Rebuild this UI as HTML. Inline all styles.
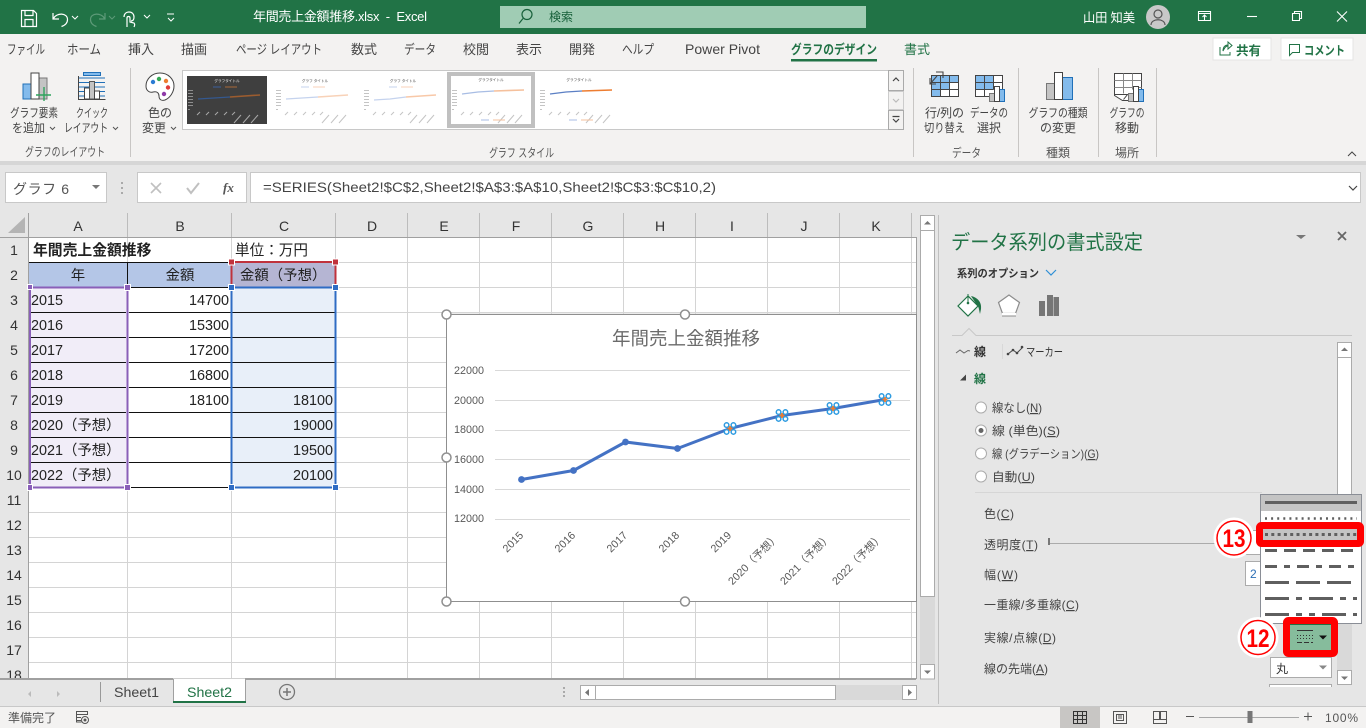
<!DOCTYPE html>
<html lang="ja"><head><meta charset="utf-8"><title>年間売上金額推移.xlsx - Excel</title>
<style>
html,body{margin:0;padding:0;width:1366px;height:728px;overflow:hidden;background:#e6e6e6}
svg{display:block;font-family:"Liberation Sans","Noto Sans CJK JP",sans-serif}
text{fill:#444;font-size:12px}
.t{font-size:13px;fill:#444}
.r{font-size:12px;fill:#444}
.g{font-size:12px;fill:#555}
.h{font-size:14px;fill:#333;text-anchor:middle}
.c{font-size:14.4px;fill:#222}
.e{text-anchor:end}
.m{text-anchor:middle}
.y{font-size:10.8px;fill:#595959;text-anchor:end}
.x{font-size:10.8px;fill:#595959;text-anchor:end}
.p{font-size:12px;fill:#444}
.s{font-size:3.6px;fill:#888;text-anchor:middle;font-weight:bold}
.b{filter:blur(.35px)}
</style></head><body>
<svg xmlns="http://www.w3.org/2000/svg" width="1366" height="728" viewBox="0 0 1366 728">
<defs>
<g id="tk" fill="#c4c4c4"><rect x="1" y="14" width="5" height="1"/><rect x="1" y="17" width="5" height="1"/><rect x="1" y="20" width="5" height="1"/><rect x="1" y="23" width="5" height="1"/><rect x="1" y="26" width="5" height="1"/><rect x="1" y="29" width="5" height="1"/><rect x="1" y="33" width="2" height="1"/></g>
<g id="xl" stroke="#c4c4c4" stroke-width="1"><path d="M10 39l3-3M19 39l3-3M28 39l3-3M37 39l3-3M45 39l3-3M47 47l7-8M56 47l7-8M64 47l7-8"/></g>
<g id="mk"><g fill="#fff" stroke="#2e9be0" stroke-width="1.500"><circle cx="-3.400" cy="-3.400" r="2.300"/><circle cx="3.400" cy="-3.400" r="2.300"/><circle cx="-3.400" cy="3.400" r="2.300"/><circle cx="3.400" cy="3.400" r="2.300"/></g><path d="M0-2.500V2.500M-2.500 0H2.500" stroke="#ed7d31" stroke-width="1.800"/></g>
</defs>

<!-- title bar -->
<rect width="1366" height="34" fill="#217346"/>
<g fill="none" stroke="#fff" stroke-width="1.200">
<path d="M21.500 10.500h12l3 3v13h-15zM25 10.500v5h8v-5M25 26.500v-7h8v7"/>
<path d="M53 13v6h6M53.500 18.500c3-6 14-6 14 1 0 4-3 6-6 7"/>
<path d="M72 16l3 3 3-3M144 15l3 3 3-3" stroke-width="1"/>
<path d="M167 14h7M168 18l3 3 3-3" stroke-width="1"/>
<path d="M124 17c0-3 2-5 5-5s5 2 5 5-1 4-3 4M127 27v-9c0-2 3-2 3 0v4l4 1c1 1 1 2 0 4"/>
</g>
<g fill="none" stroke="#5d9a78" stroke-width="1.200"><path d="M105 13v6h-6M104.500 18.500c-3-6-14-6-14 1 0 4 3 6 6 7"/><path d="M109 16l3 3 3-3" stroke-width="1"/></g>
<text x="253" y="21" style="font-size:13px;fill:#fff" textLength="174" lengthAdjust="spacing">年間売上金額推移.xlsx&#160;&#160;-&#160;&#160;Excel</text>
<rect x="500" y="6" width="366" height="22" fill="#a0ccb4"/>
<g fill="none" stroke="#17603a" stroke-width="1.200"><circle cx="527" cy="14.500" r="5"/><path d="M523 18.500l-4 5"/></g>
<text x="549" y="21" style="font-size:12px;fill:#17603a">検索</text>
<text x="1083" y="22" style="font-size:12.300px;fill:#fff" textLength="52">山田&#160;知美</text>
<circle cx="1158" cy="17" r="12" fill="#c8c8c8"/>
<g fill="none" stroke="#555" stroke-width="1.200"><circle cx="1158" cy="14" r="4"/><path d="M1151 25c0-7 14-7 14 0"/></g>
<g fill="none" stroke="#fff" stroke-width="1.100">
<path d="M1198.500 11.500h12v9h-12zM1198.500 13.500h12M1204.500 20v-5M1202.500 17l2-2 2 2"/>
<path d="M1247 16.500h10"/>
<path d="M1292.500 13.500h7v7h-7zM1294.500 13.500v-2h7v7h-2"/>
<path d="M1337 11.500l10 10M1347 11.500l-10 10"/>
</g>

<!-- tabs + ribbon -->
<rect y="34" width="1366" height="127" fill="#f3f2f1"/>
<rect y="161" width="1366" height="4" fill="#d6d6d6"/>
<text class="t" x="7" y="54" textLength="38" lengthAdjust="spacingAndGlyphs">ファイル</text>
<text class="t" x="67" y="54" textLength="34" lengthAdjust="spacingAndGlyphs">ホーム</text>
<text class="t" x="128" y="54" textLength="26">挿入</text>
<text class="t" x="181" y="54" textLength="26">描画</text>
<text class="t" x="236" y="54" textLength="86" lengthAdjust="spacingAndGlyphs">ページ レイアウト</text>
<text class="t" x="351" y="54" textLength="26">数式</text>
<text class="t" x="404" y="54" textLength="32" lengthAdjust="spacingAndGlyphs">データ</text>
<text class="t" x="463" y="54" textLength="26">校閲</text>
<text class="t" x="516" y="54" textLength="26">表示</text>
<text class="t" x="569" y="54" textLength="26">開発</text>
<text class="t" x="622" y="54" textLength="32" lengthAdjust="spacingAndGlyphs">ヘルプ</text>
<text class="t" x="685" y="54" style="font-size:14px" textLength="75">Power Pivot</text>
<text class="t" x="791" y="54" textLength="86" lengthAdjust="spacingAndGlyphs" style="fill:#217346;font-weight:bold">グラフのデザイン</text>
<rect x="791" y="59" width="86" height="2.500" fill="#217346"/>
<text class="t" x="904" y="54" textLength="26" style="fill:#217346">書式</text>
<rect x="1213" y="38" width="58" height="22" fill="#fff" stroke="#e4e4e4"/>
<path d="M1220 47v8h10v-3M1223 51c0-4 2-6 5-6v-3l4 3.500-4 3.500v-3c-2 0-3 1-5 5z" fill="none" stroke="#217346" stroke-width="1"/>
<text x="1236" y="55" style="font-size:12.500px;font-weight:bold;fill:#217346" textLength="25">共有</text>
<rect x="1281" y="38" width="72" height="22" fill="#fff" stroke="#e4e4e4"/>
<path d="M1289.500 44.500h10v8h-7l-3 3z" fill="none" stroke="#217346" stroke-width="1"/>
<text x="1304" y="55" style="font-size:12.500px;font-weight:bold;fill:#217346" textLength="41" lengthAdjust="spacingAndGlyphs">コメント</text>

<g fill="#c8c6c4"><rect x="130" y="68" width="1" height="89"/><rect x="913" y="68" width="1" height="89"/><rect x="1018" y="68" width="1" height="89"/><rect x="1098" y="68" width="1" height="89"/><rect x="1156" y="68" width="1" height="89"/></g>

<!-- add chart element -->
<rect x="23" y="84" width="9" height="15" fill="#83bbec" stroke="#2070b8"/>
<rect x="39" y="78" width="8" height="21" fill="#c4c4c4" stroke="#777"/>
<rect x="31" y="73" width="8" height="26" fill="#fff" stroke="#444"/>
<path d="M44 87v14M36 95h15" stroke="#2fa35d" stroke-width="1.400"/>
<!-- quick layout -->
<rect x="83.500" y="72.500" width="17" height="3" fill="#83bbec" stroke="#2070b8"/>
<path d="M78 78h27M78 82.500h27M78 87h27M78 91.500h27M78 96h27" stroke="#2070b8"/>
<path d="M78.500 76v23.500h27" fill="none" stroke="#444"/>
<rect x="84.500" y="88" width="5" height="11" fill="#fff" stroke="#444"/>
<rect x="89.500" y="81.500" width="5" height="17.500" fill="#c4c4c4" stroke="#555"/>
<rect x="94.500" y="91" width="5" height="8" fill="#fff" stroke="#444"/>
<text class="r m" x="34" y="117" textLength="48" lengthAdjust="spacingAndGlyphs">グラフ要素</text>
<text class="r" x="12" y="132" textLength="33" lengthAdjust="spacingAndGlyphs">を追加</text><path d="M50 127l2.500 2.500 2.500-2.500" fill="none" stroke="#555"/>
<text class="r m" x="92" y="117" textLength="32" lengthAdjust="spacingAndGlyphs">クイック</text>
<text class="r" x="64" y="132" textLength="44" lengthAdjust="spacingAndGlyphs">レイアウト</text><path d="M113 127l2.500 2.500 2.500-2.500" fill="none" stroke="#555"/>
<text class="g" x="25" y="156" textLength="80" lengthAdjust="spacingAndGlyphs">グラフのレイアウト</text>
<!-- palette -->
<path d="M160 73c-8 0-14 6-14 13 0 5 4 7 7 6 4-1 6 1 6 4 0 4 3 5 6 4 5-2 9-8 9-14 0-7-6-13-14-13z" fill="#fff" stroke="#444"/>
<circle cx="153" cy="82" r="2.200" fill="#2b7cd3"/><circle cx="159" cy="79" r="2.200" fill="#33a853"/><circle cx="166" cy="81" r="2.200" fill="#ed7d31"/><circle cx="168" cy="87.500" r="2.200" fill="#e03a3a"/><circle cx="164" cy="94" r="2.200" fill="#8e3aa8"/>
<text class="r" x="148" y="117" textLength="24">色の</text>
<text class="r" x="142" y="132" textLength="24">変更</text><path d="M171 127l2.500 2.500 2.500-2.500" fill="none" stroke="#555"/>

<!-- gallery -->
<rect x="182.500" y="70.500" width="721" height="59" fill="#fff" stroke="#c8c8c8"/>
<rect x="187" y="76" width="80" height="48" fill="#3f3f3f"/>
<g class="b" transform="translate(187 76)"><text class="s" x="40" y="6" style="fill:#bbb">グラフタイトル</text><path d="M26 11h8" stroke="#3b5f9e"/><path d="M38 11h12" stroke="#a86a3a"/><use href="#tk" opacity=".6"/><use href="#xl" opacity=".8"/><path d="M11 23l16-1 16-1" stroke="#34588f" stroke-width="1.300" fill="none"/><path d="M43 21l30-2" stroke="#9c5c2f" stroke-width="1.600" fill="none"/></g>
<g class="b" transform="translate(275 76)"><text class="s" x="40" y="6">グラフ タイトル</text><path d="M26 11h8" stroke="#c5d3ee"/><path d="M38 11h12" stroke="#f8d2b8"/><use href="#tk"/><use href="#xl"/><path d="M11 23l16-1 16-1" stroke="#c5d3ee" stroke-width="1.300" fill="none"/><path d="M43 21l30-2" stroke="#f8d2b8" stroke-width="1.600" fill="none"/></g>
<g class="b" transform="translate(363 76)"><text class="s" x="40" y="6">グラフ タイトル</text><path d="M26 11h8" stroke="#c5d3ee"/><path d="M38 11h12" stroke="#f8d2b8"/><use href="#tk"/><use href="#xl"/><path d="M11 24l16-1 16-2" stroke="#c5d3ee" stroke-width="1.300" fill="none"/><path d="M43 21l30-2" stroke="#f8c8a8" stroke-width="1.600" fill="none"/></g>
<rect x="447" y="72" width="88" height="56" fill="#c0c0c0"/><rect x="451" y="76" width="80" height="48" fill="#fff"/>
<g class="b" transform="translate(451 76)"><text class="s" x="40" y="5">グラフタイトル</text><use href="#tk"/><use href="#xl"/><path d="M11 18l16-2 16-1" stroke="#a8bde4" stroke-width="1.300" fill="none"/><path d="M43 15l30-1" stroke="#f5c09c" stroke-width="1.600" fill="none"/><path d="M30 44h8" stroke="#a8bde4"/><path d="M42 44h12" stroke="#f5c09c"/></g>
<g class="b" transform="translate(539 76)"><text class="s" x="40" y="5">グラフタイトル</text><use href="#tk"/><use href="#xl"/><path d="M11 18l16-2 16-1" stroke="#5b7fc4" stroke-width="1.300" fill="none"/><path d="M43 15l30-1" stroke="#ed7d31" stroke-width="1.400" fill="none"/><path d="M30 44h8" stroke="#a8bde4"/><path d="M42 44h12" stroke="#f5c09c"/></g>
<g fill="#f3f2f1" stroke="#aaa"><rect x="888.500" y="70.500" width="15" height="20"/><rect x="888.500" y="91.500" width="15" height="18" stroke="#ccc"/><rect x="888.500" y="110.500" width="15" height="19"/></g>
<path d="M893 81l3-3 3 3" fill="none" stroke="#444" stroke-width="1.200"/>
<path d="M893 99l3 3 3-3" fill="none" stroke="#bbb" stroke-width="1.200"/>
<path d="M892.500 116.500h7M893 119l3 3 3-3" fill="none" stroke="#444" stroke-width="1.200"/>
<text class="g" x="489" y="157" textLength="65" lengthAdjust="spacingAndGlyphs">グラフ スタイル</text>

<!-- data group -->
<rect x="931.500" y="75.500" width="27" height="21" fill="#fff" stroke="#444"/>
<path d="M932 75h27v7h-9v7h-9v7h-9z" fill="#83bbec"/>
<path d="M931.500 82.500h27M931.500 89.500h27M940.500 75.500v21M949.500 75.500v21" stroke="#444" fill="none"/><rect x="931.500" y="75.500" width="27" height="21" fill="none" stroke="#444"/>
<path d="M930 84l7-8M936 72h7v6M941 72h-5M930 78v6h6" fill="none" stroke="#444" stroke-width="1.100"/>
<text class="r" x="925" y="117" textLength="39">行/列の</text>
<text class="r" x="924" y="132" textLength="41" lengthAdjust="spacingAndGlyphs">切り替え</text>
<rect x="975.500" y="75.500" width="27" height="21" fill="#fff" stroke="#444"/>
<path d="M976 76h18v14h-18z" fill="#83bbec"/>
<path d="M975.500 82.500h27M975.500 89.500h18M984.500 75.500v21M993.500 75.500v14" stroke="#444" fill="none"/>
<rect x="989.500" y="93.500" width="5" height="8" fill="#c4c4c4" stroke="#777"/><rect x="999.500" y="89.500" width="5" height="12" fill="#83bbec" stroke="#2070b8"/><rect x="994.500" y="86.500" width="5" height="15" fill="#fff" stroke="#444"/>
<text class="r" x="970" y="117" textLength="38" lengthAdjust="spacingAndGlyphs">データの</text>
<text class="r" x="977" y="132" textLength="24">選択</text>
<text class="g" x="952" y="157" textLength="29" lengthAdjust="spacingAndGlyphs">データ</text>
<!-- chart type -->
<rect x="1046.500" y="83.500" width="8" height="16" fill="#c4c4c4" stroke="#777"/><rect x="1062.500" y="77.500" width="10" height="22" fill="#83bbec" stroke="#2070b8"/><rect x="1054.500" y="72.500" width="8" height="27" fill="#fff" stroke="#444"/>
<text class="r m" x="1058" y="117" textLength="59" lengthAdjust="spacingAndGlyphs">グラフの種類</text>
<text class="r m" x="1058" y="132" textLength="36">の変更</text>
<text class="g" x="1046" y="157" textLength="24">種類</text>
<!-- move -->
<path d="M1114.500 73.500h27v16h-5v11h-14l-8-5z" fill="#fff" stroke="#444"/>
<path d="M1114.500 80.500h27M1114.500 87.500h27M1123.500 73.500v20M1132.500 73.500v16" stroke="#888" fill="none"/>
<path d="M1114.500 94.500h13l-4 5" fill="none" stroke="#444"/>
<rect x="1128.500" y="93.500" width="5" height="8" fill="#c4c4c4" stroke="#777"/><rect x="1138.500" y="89.500" width="5" height="12" fill="#83bbec" stroke="#2070b8"/><rect x="1133.500" y="86.500" width="5" height="15" fill="#fff" stroke="#444"/>
<text class="r m" x="1127" y="117" textLength="35" lengthAdjust="spacingAndGlyphs">グラフの</text>
<text class="r m" x="1127" y="132" textLength="24">移動</text>
<text class="g" x="1115" y="157" textLength="24">場所</text>
<path d="M1348 156l4-4 4 4" fill="none" stroke="#444"/>

<!-- formula bar -->
<rect y="165" width="1366" height="48" fill="#e6e6e6"/>
<rect x="5.500" y="172.500" width="101" height="30" fill="#fff" stroke="#c8c8c8"/>
<text x="13" y="194" style="font-size:14px;fill:#555" textLength="56" lengthAdjust="spacing">グラフ 6</text>
<path d="M92 185h8l-4 4z" fill="#777"/>
<g fill="#aaa"><rect x="121" y="182" width="2" height="2"/><rect x="121" y="187" width="2" height="2"/><rect x="121" y="192" width="2" height="2"/></g>
<rect x="137.500" y="172.500" width="109" height="30" fill="#fff" stroke="#c8c8c8"/>
<path d="M151 183l10 10M161 183l-10 10" stroke="#c0c0c0" stroke-width="1.600"/>
<path d="M187 188l4 5 8-10" fill="none" stroke="#c0c0c0" stroke-width="2"/>
<text x="223" y="192" style="font-family:'Liberation Serif',serif;font-style:italic;font-weight:bold;font-size:13px;fill:#555">fx</text>
<rect x="250.500" y="172.500" width="1110" height="30" fill="#fff" stroke="#c8c8c8"/>
<text x="263" y="192" style="font-size:14px;fill:#444" textLength="453" lengthAdjust="spacingAndGlyphs">=SERIES(Sheet2!$C$2,Sheet2!$A$3:$A$10,Sheet2!$C$3:$C$10,2)</text>
<path d="M1349 186l4 4 4-4" fill="none" stroke="#444" stroke-width="1.200"/>

<!-- sheet -->
<rect x="0" y="237" width="916" height="441" fill="#fff"/>
<rect x="0" y="213" width="916" height="24" fill="#e6e6e6"/>
<rect x="0" y="237" width="28" height="441" fill="#e6e6e6"/>
<path d="M8 233L25 217v16z" fill="#b4b4b4"/>
<g stroke="#d4d4d4" fill="none">
<path d="M127.500 237V678M231.500 237V678M335.500 237V678M407.500 237V678M479.500 237V678M551.500 237V678M623.500 237V678M695.500 237V678M767.500 237V678M839.500 237V678M911.500 237V678"/>
<path d="M29 262.500H916M29 287.500H916M29 312.500H916M29 337.500H916M29 362.500H916M29 387.500H916M29 412.500H916M29 437.500H916M29 462.500H916M29 487.500H916M29 512.500H916M29 537.500H916M29 562.500H916M29 587.500H916M29 612.500H916M29 637.500H916M29 662.500H916"/>
</g>
<g stroke="#bcbcbc"><path d="M28.500 213v24M127.500 213v24M231.500 213v24M335.500 213v24M407.500 213v24M479.500 213v24M551.500 213v24M623.500 213v24M695.500 213v24M767.500 213v24M839.500 213v24M911.500 213v24"/></g>
<path d="M0 237.500H916M28.500 213V678" stroke="#a0a0a0" fill="none"/>
<path d="M916.500 237V678.500H0" fill="none" stroke="#a0a0a0"/>
<text class="h" x="78" y="231">A</text><text class="h" x="180" y="231">B</text><text class="h" x="284" y="231">C</text><text class="h" x="372" y="231">D</text><text class="h" x="444" y="231">E</text><text class="h" x="516" y="231">F</text><text class="h" x="588" y="231">G</text><text class="h" x="660" y="231">H</text><text class="h" x="732" y="231">I</text><text class="h" x="804" y="231">J</text><text class="h" x="876" y="231">K</text>
<text class="h" x="14" y="255">1</text><text class="h" x="14" y="280">2</text><text class="h" x="14" y="305">3</text><text class="h" x="14" y="330">4</text><text class="h" x="14" y="355">5</text><text class="h" x="14" y="380">6</text><text class="h" x="14" y="405">7</text><text class="h" x="14" y="430">8</text><text class="h" x="14" y="455">9</text><text class="h" x="14" y="480">10</text><text class="h" x="14" y="505">11</text><text class="h" x="14" y="530">12</text><text class="h" x="14" y="555">13</text><text class="h" x="14" y="580">14</text><text class="h" x="14" y="605">15</text><text class="h" x="14" y="630">16</text><text class="h" x="14" y="655">17</text><text class="h" x="14" y="680">18</text>
<rect x="0" y="678" width="916" height="2" fill="#a0a0a0"/>

<!-- table -->
<rect x="29" y="263" width="202" height="24" fill="#b4c6e7"/>
<rect x="232" y="263" width="104" height="24" fill="#b5b5d3"/>
<rect x="30" y="288" width="97" height="199" fill="#f1edf8"/>
<rect x="232" y="288" width="104" height="199" fill="#e8eff9"/>
<path d="M29 262.500H231M29 287.500H231M232 312.500H335M129 312.500H231M29 312.500H126M29 337.500H126M129 337.500H231M232 337.500H335M29 362.500H126M129 362.500H231M232 362.500H335M29 387.500H126M129 387.500H231M232 387.500H335M29 412.500H126M129 412.500H231M232 412.500H335M29 437.500H126M129 437.500H231M232 437.500H335M29 462.500H126M129 462.500H231M232 462.500H335M129 487.500H231M127.500 262V287" stroke="#111" fill="none"/>
<text class="c" x="33" y="255" style="font-weight:bold;font-size:14.800px">年間売上金額推移</text>
<text class="c" x="235" y="255" style="font-size:14.600px">単位：万円</text>
<text class="c m" x="78" y="280">年</text><text class="c m" x="180" y="280">金額</text>
<text class="c" x="240" y="280">金額（予想）</text>
<text class="c" x="31" y="305">2015</text><text class="c" x="31" y="330">2016</text><text class="c" x="31" y="355">2017</text><text class="c" x="31" y="380">2018</text><text class="c" x="31" y="405">2019</text>
<text class="c" x="31" y="430">2020（予想）</text><text class="c" x="31" y="455">2021（予想）</text><text class="c" x="31" y="480">2022（予想）</text>
<text class="c e" x="229" y="305">14700</text><text class="c e" x="229" y="330">15300</text><text class="c e" x="229" y="355">17200</text><text class="c e" x="229" y="380">16800</text><text class="c e" x="229" y="405">18100</text>
<text class="c e" x="333" y="405">18100</text><text class="c e" x="333" y="430">19000</text><text class="c e" x="333" y="455">19500</text><text class="c e" x="333" y="480">20100</text>
<!-- selections -->
<path d="M30 487.500V287.500H127.500V487.500H30" fill="none" stroke="#8a5fb8" stroke-width="2"/>
<path d="M231.500 287.500V262H335.500V287.500" fill="none" stroke="#c0323c" stroke-width="2"/>
<rect x="231.500" y="287.500" width="104" height="200" fill="none" stroke="#2f6cc4" stroke-width="2"/>
<g fill="#8a5fb8" stroke="#fff"><rect x="27.500" y="284.500" width="5" height="5"/><rect x="124.500" y="284.500" width="6" height="6"/><rect x="27.500" y="484.500" width="5" height="6"/><rect x="124.500" y="484.500" width="6" height="6"/></g>
<g fill="#c0323c" stroke="#fff"><rect x="228.500" y="259" width="6" height="6"/><rect x="332.500" y="259" width="6" height="6"/></g>
<g fill="#2f6cc4" stroke="#fff"><rect x="228.500" y="284.500" width="6" height="6"/><rect x="332.500" y="284.500" width="6" height="6"/><rect x="228.500" y="484.500" width="6" height="6"/><rect x="332.500" y="484.500" width="6" height="6"/></g>

<!-- chart -->
<rect x="446.500" y="314.500" width="470" height="287" fill="#fff" stroke="#8f8f8f"/>
<path d="M447 313H916" stroke="#d8d8d8"/>
<text x="686" y="345" class="m" style="font-size:18.500px;fill:#6b6b6b">年間売上金額推移</text>
<path d="M495 370.500H910M495 400.500H910M495 430.500H910M495 459.500H910M495 489.500H910M495 519.500H910" stroke="#d9d9d9"/>
<text class="y" x="484" y="374">22000</text><text class="y" x="484" y="404">20000</text><text class="y" x="484" y="433">18000</text><text class="y" x="484" y="463">16000</text><text class="y" x="484" y="493">14000</text><text class="y" x="484" y="522">12000</text>
<polyline points="521.500,479.500 573.500,470.500 625.500,442 677.500,448.500 730,428.500 782,415.500 833,408.500 885,399.500" fill="none" stroke="#4472c4" stroke-width="3" stroke-linejoin="round"/>
<g fill="#4472c4"><circle cx="521.500" cy="479.500" r="3.400"/><circle cx="573.500" cy="470.500" r="3.400"/><circle cx="625.500" cy="442" r="3.400"/><circle cx="677.500" cy="448.500" r="3.400"/></g>
<use href="#mk" x="730" y="428.500"/><use href="#mk" x="782" y="415.500"/><use href="#mk" x="833" y="408.500"/><use href="#mk" x="885" y="399.500"/>
<text class="x" transform="translate(524 536) rotate(-45)">2015</text>
<text class="x" transform="translate(576 536) rotate(-45)">2016</text>
<text class="x" transform="translate(628 536) rotate(-45)">2017</text>
<text class="x" transform="translate(680 536) rotate(-45)">2018</text>
<text class="x" transform="translate(732 536) rotate(-45)">2019</text>
<text class="x" transform="translate(780 538) rotate(-45)">2020（予想）</text>
<text class="x" transform="translate(832 538) rotate(-45)">2021（予想）</text>
<text class="x" transform="translate(884 538) rotate(-45)">2022（予想）</text>
<g fill="#fff" stroke="#8f8f8f" stroke-width="1.500"><circle cx="446.500" cy="314.500" r="4.500"/><circle cx="685" cy="314.500" r="4.500"/><circle cx="446.500" cy="457.500" r="4.500"/><circle cx="446.500" cy="601.500" r="4.500"/><circle cx="685" cy="601.500" r="4.500"/></g>

<!-- v scroll -->
<rect x="917" y="213" width="21" height="493" fill="#e6e6e6"/>
<rect x="920" y="597" width="15" height="82" fill="#d9d9d9"/>
<rect x="920.500" y="215.500" width="14" height="381" fill="#fff" stroke="#ababab"/>
<path d="M920 230.500H935" stroke="#ababab"/>
<path d="M924 224.500h7l-3.500-3.500z" fill="#777"/>
<rect x="920.500" y="664.500" width="14" height="14.500" fill="#fff" stroke="#ababab"/>
<path d="M924 670.500h7l-3.500 3.500z" fill="#777"/>
<path d="M938.500 215V704" stroke="#c0c0c0"/>

<!-- tab bar -->
<rect x="0" y="680" width="938" height="26" fill="#e6e6e6"/>
<path d="M31 691l-3 3 3 3zM57 691l3 3-3 3z" fill="#bbb"/>
<rect x="100" y="682" width="1" height="20" fill="#999"/>
<text x="114" y="697" style="font-size:14px;fill:#444" textLength="45" lengthAdjust="spacingAndGlyphs">Sheet1</text>
<path d="M173 702V678.500H245V702z" fill="#fff"/>
<path d="M173.500 702V679M245.500 702V679" stroke="#a0a0a0"/>
<rect x="173" y="701" width="73" height="2" fill="#217346"/>
<text x="187" y="697" style="font-size:14px;fill:#217346" textLength="45" lengthAdjust="spacingAndGlyphs">Sheet2</text>
<circle cx="287" cy="692" r="7.500" fill="none" stroke="#777" stroke-width="1.300"/><path d="M287 688v8M283 692h8" stroke="#777" stroke-width="1.500"/>
<g fill="#aaa"><rect x="563" y="687" width="2" height="2"/><rect x="563" y="691" width="2" height="2"/><rect x="563" y="695" width="2" height="2"/></g>
<rect x="580" y="685" width="336" height="15" fill="#d9d9d9"/>
<rect x="580.500" y="685.500" width="15" height="14" fill="#fff" stroke="#ababab"/>
<rect x="595.500" y="685.500" width="240" height="14" fill="#fff" stroke="#ababab"/>
<rect x="902.500" y="685.500" width="14" height="14" fill="#fff" stroke="#ababab"/>
<path d="M589 689v7l-4-3.500zM908 689v7l4-3.500z" fill="#777"/>

<!-- panel -->
<rect x="939" y="213" width="427" height="493" fill="#e6e6e6"/>
<text x="951" y="249" style="font-size:20px;fill:#217346" textLength="192" lengthAdjust="spacingAndGlyphs">データ系列の書式設定</text>
<path d="M1296 235h10l-5 4z" fill="#777"/>
<path d="M1338 232l8 8M1346 232l-8 8" stroke="#666" stroke-width="1.800"/>
<text x="957" y="277" style="font-size:11px;font-weight:bold;fill:#333" textLength="82" lengthAdjust="spacingAndGlyphs">系列のオプション</text>
<path d="M1046 270l5 5 5-5" fill="none" stroke="#2e8fd6" stroke-width="1.200"/>
<path d="M968 296l-10 10 10 10 10-10z" fill="#fff" stroke="#217346" stroke-width="1.200"/>
<path d="M968 294v9" stroke="#217346"/><circle cx="968" cy="303" r="1.300" fill="#217346"/>
<path d="M971 296c5 1 11 5 10 13l-1 5c-1-4-1-7-3-9z" fill="#217346"/>
<path d="M1009 295l10.500 7.500-4 11h-13l-4-11z" fill="#fff" stroke="#8c8c8c" stroke-width="1.200"/><rect x="1002" y="313" width="14" height="3" fill="#fff"/><path d="M1002 316h14" stroke="#8c8c8c"/>
<path d="M1039 301h6v15h-6zM1047 295h6v21h-6zM1053.500 297h5.500v19h-5.500z" fill="#767676"/>
<path d="M952 335.500H962l7-7 7 7H1352" fill="none" stroke="#c8c8c8"/>
<path d="M956 353l4-3 4 3 4-2.500 2 .5" fill="none" stroke="#666"/>
<text x="974" y="356" style="font-size:12px;font-weight:bold;fill:#333">線</text>
<path d="M1002.500 344v15" stroke="#d8d8d8"/>
<path d="M1008 354l5-4 4 3 6-6" fill="none" stroke="#444"/><g fill="#444"><circle cx="1008" cy="354" r="1.300"/><circle cx="1013" cy="350" r="1.300"/><circle cx="1017" cy="353" r="1.300"/><circle cx="1022" cy="347" r="1.300"/></g>
<text x="1026" y="356" style="font-size:11.500px;fill:#333" textLength="37" lengthAdjust="spacingAndGlyphs">マーカー</text>
<path d="M960 380.500h6v-6z" fill="#444"/>
<text x="974" y="383" style="font-size:12px;font-weight:bold;fill:#217346">線</text>
<g fill="#fff" stroke="#ababab"><circle cx="981" cy="407.500" r="5.500"/><circle cx="981" cy="430.500" r="5.500"/><circle cx="981" cy="453.500" r="5.500"/><circle cx="981" cy="476.500" r="5.500"/></g>
<circle cx="981" cy="430.500" r="2.500" fill="#666"/>
<text class="p" x="992" y="412" textLength="50" lengthAdjust="spacingAndGlyphs">線なし(<tspan text-decoration="underline">N</tspan>)</text>
<text class="p" x="992" y="435" textLength="68" lengthAdjust="spacingAndGlyphs">線 (単色)(<tspan text-decoration="underline">S</tspan>)</text>
<text class="p" x="992" y="458" textLength="107" lengthAdjust="spacingAndGlyphs">線 (グラデーション)(<tspan text-decoration="underline">G</tspan>)</text>
<text class="p" x="992" y="481" textLength="43" lengthAdjust="spacingAndGlyphs">自動(<tspan text-decoration="underline">U</tspan>)</text>
<path d="M975 492.500H1262" stroke="#d6d6d6"/>
<text class="p" x="984" y="518" textLength="30">色(<tspan text-decoration="underline">C</tspan>)</text>
<text class="p" x="984" y="549" textLength="54">透明度(<tspan text-decoration="underline">T</tspan>)</text>
<text class="p" x="984" y="579" textLength="34">幅(<tspan text-decoration="underline">W</tspan>)</text>
<text class="p" x="984" y="609" textLength="95">一重線/多重線(<tspan text-decoration="underline">C</tspan>)</text>
<text class="p" x="984" y="642" textLength="72">実線/点線(<tspan text-decoration="underline">D</tspan>)</text>
<text class="p" x="984" y="673" textLength="64" lengthAdjust="spacingAndGlyphs">線の先端(<tspan text-decoration="underline">A</tspan>)</text>
<path d="M1049 538v7" stroke="#777" stroke-width="2"/><path d="M1050 543.500H1225" stroke="#ababab"/>
<rect x="1245.500" y="530.500" width="30" height="24" fill="#fff" stroke="#ababab"/>
<rect x="1245.500" y="561.500" width="30" height="24" fill="#fff" stroke="#ababab"/>
<text x="1250" y="578" style="font-size:12px;fill:#2c6fb5">2</text>
<!-- panel scrollbar -->
<rect x="1337" y="357" width="15" height="313" fill="#d9d9d9"/>
<rect x="1337.500" y="342.500" width="14" height="152" fill="#fff" stroke="#ababab"/>
<path d="M1337 357.500h15" stroke="#ababab"/>
<path d="M1341 351h7l-3.500-3.500z" fill="#777"/>
<rect x="1337.500" y="670.500" width="14" height="14" fill="#fff" stroke="#ababab"/>
<path d="M1341 676.500h7l-3.500 3.500z" fill="#777"/>
<!-- combos -->
<rect x="1270.500" y="657.500" width="61" height="20" fill="#fff" stroke="#ababab"/>
<text x="1276" y="673" style="font-size:12px;fill:#333">丸</text>
<path d="M1319 665.500h8l-4 4z" fill="#888"/>
<path d="M1269.500 687v-2.500h62v2.500" fill="#fff" stroke="#ababab"/><rect x="1270" y="685" width="61" height="2" fill="#fff"/>

<!-- dropdown -->
<rect x="1260.500" y="494.500" width="101" height="129" fill="#fff" stroke="#8a8e96"/>
<rect x="1261" y="495" width="100" height="16" fill="#c4c4c4"/>
<rect x="1263" y="529" width="94" height="12" fill="#c4c4c4"/>
<g stroke="#5f5f5f" stroke-width="3" fill="none">
<path d="M1265 502.500h92"/>
<path d="M1265 518.500h92" stroke-dasharray="2 4.100" stroke-width="2.400"/>
<path d="M1265 534.500h92" stroke-dasharray="3 3.300"/>
<path d="M1265 550.500h92" stroke-dasharray="12 7"/>
<path d="M1265 566.500h92" stroke-dasharray="12 7 6 7"/>
<path d="M1265 582.500h92" stroke-dasharray="24 7"/>
<path d="M1265 598.500h92" stroke-dasharray="24 7 6 7"/>
<path d="M1265 614.500h92" stroke-dasharray="24 7 6 7 6 7"/>
</g>
<rect x="1259.500" y="525.500" width="101" height="18" rx="2" fill="none" stroke="#ff0000" stroke-width="7"/>
<!-- button 12 -->
<rect x="1286.500" y="620.500" width="48" height="33" rx="2" fill="#86bc9c" stroke="#ff0000" stroke-width="7"/>
<path d="M1290 624.500h41" stroke="#217346"/>
<path d="M1297 630.500h16" stroke="#333"/><path d="M1297 635.500h16M1297 638.500h16" stroke="#333" stroke-dasharray="1 2"/><path d="M1297 642.500h5M1304 642.500h5M1311 642.500h2" stroke="#333"/>
<path d="M1319 635.500h8l-4 4z" fill="#111"/>
<!-- number badges -->
<circle cx="1234" cy="538" r="20.500" fill="#fff"/>
<circle cx="1234" cy="538" r="17" fill="none" stroke="#ff0000" stroke-width="1.500"/>
<text x="1234" y="547" class="m" style="font-size:25px;font-weight:bold;fill:#ff0000" textLength="23" lengthAdjust="spacingAndGlyphs">13</text>
<circle cx="1258" cy="637.500" r="20.500" fill="#fff"/>
<circle cx="1258" cy="637.500" r="17" fill="none" stroke="#ff0000" stroke-width="1.500"/>
<text x="1258" y="647" class="m" style="font-size:25px;font-weight:bold;fill:#ff0000" textLength="23" lengthAdjust="spacingAndGlyphs">12</text>

<!-- status bar -->
<rect x="0" y="706" width="1366" height="22" fill="#f3f2f1"/>
<path d="M0 706.500H1366" stroke="#c8c8c8"/>
<text x="8" y="722" style="font-size:12px;fill:#555">準備完了</text>
<path d="M76 711.500h11M76 714.500h11M76 717.500h5M76 720.500h5M76.500 711v11h5M87.500 711v4" fill="none" stroke="#555"/>
<circle cx="85" cy="720" r="3.500" fill="none" stroke="#555"/><circle cx="85" cy="720" r="1.500" fill="#555"/>
<rect x="1060" y="707" width="40" height="21" fill="#c8c6c4"/>
<path d="M1073.500 711.500h13v12h-13zM1073.500 715.500h13M1073.500 719.500h13M1077.500 711.500v12M1082.500 711.500v12" fill="none" stroke="#333"/>
<path d="M1113.500 711.500h13v12h-13zM1116.500 714.500h7v6h-7zM1118 716h4M1118 718h4" fill="none" stroke="#555"/>
<path d="M1153.500 711.500h13v12h-13zM1153.500 719.500h6v-8M1160.500 711.500v8h6" fill="none" stroke="#555"/>
<path d="M1186 716.500h8M1304 716.500h8M1308 712.500v8" stroke="#555"/>
<path d="M1199 717.500h100" stroke="#a8a8a8"/>
<rect x="1247.500" y="711" width="5" height="12" fill="#777"/>
<text x="1325" y="722" style="font-size:12px;fill:#555" textLength="33">100%</text>
</svg>
</body></html>
